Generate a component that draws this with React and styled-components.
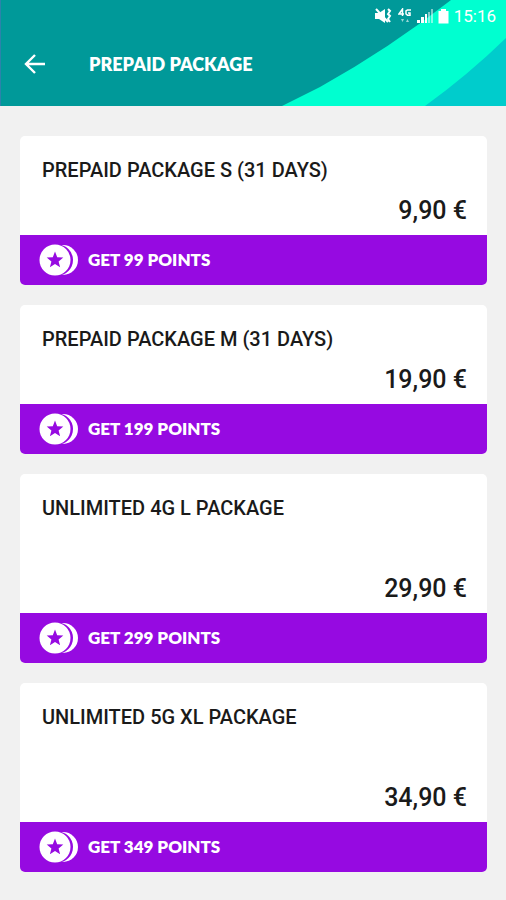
import styled, { createGlobalStyle } from 'styled-components';

const GlobalStyle = createGlobalStyle`
  * {
    box-sizing: border-box;
  }
  body {
    margin: 0;
    background: #f1f1f1;
    font-family: Roboto, 'Liberation Sans', sans-serif;
    color: #1a1a1a;
  }
`;

const Header = styled.header`
  position: relative;
  background: #009999;
  border-left: 1px solid #2b83ab;
  color: #fff;
  overflow: hidden;
`;

const Swoosh = styled.svg`
  position: absolute;
  top: 0;
  right: 0;
  width: 226px;
  height: 100%;
`;

const StatusBar = styled.div`
  position: relative;
  display: flex;
  justify-content: flex-end;
  align-items: center;
  height: 32px;
  padding: 0 10px;
  gap: 5px;
`;

const Clock = styled.time`
  font-size: 17px;
  line-height: 20px;
`;

const TitleBar = styled.div`
  position: relative;
  display: flex;
  align-items: center;
  height: 74px;
  padding: 0 20px 10px;
  gap: 38px;
`;

const BackButton = styled.button`
  display: flex;
  padding: 0;
  border: 0;
  background: none;
  color: inherit;
  cursor: pointer;
`;

const Title = styled.h1`
  margin: 0;
  font-family: Lato, 'Open Sans', sans-serif;
  font-size: 18px;
  line-height: 24px;
  font-weight: 800;
`;

const PackageList = styled.main`
  display: flex;
  flex-direction: column;
  gap: 20px;
  padding: 30px 19px 28px 20px;
`;

const Card = styled.article`
  border-radius: 5px;
  background: #fff;
  overflow: hidden;
`;

const CardBody = styled.div`
  display: flex;
  flex-direction: column;
  justify-content: space-between;
  height: ${({ $tall }) => ($tall ? '139px' : '99px')};
  padding: 22px 20px 9px 22px;
`;

const CardTitle = styled.h2`
  margin: 0;
  font-size: 20px;
  line-height: 24px;
  font-weight: 500;
`;

const Price = styled.p`
  margin: 0;
  font-size: 25px;
  line-height: 30px;
  font-weight: 500;
  text-align: right;
`;

const PointsButton = styled.button`
  display: flex;
  align-items: center;
  width: 100%;
  height: 50px;
  padding: 0 18px;
  gap: 9px;
  border: 0;
  background: #960ae1;
  color: #fff;
  font-family: Lato, 'Open Sans', sans-serif;
  font-size: 17px;
  line-height: 24px;
  font-weight: 800;
  cursor: pointer;
`;

const packages = [
  { name: 'PREPAID PACKAGE S (31 DAYS)', price: '9,90 €', points: 99 },
  { name: 'PREPAID PACKAGE M (31 DAYS)', price: '19,90 €', points: 199 },
  { name: 'UNLIMITED 4G L PACKAGE', price: '29,90 €', points: 299, tall: true },
  { name: 'UNLIMITED 5G XL PACKAGE', price: '34,90 €', points: 349, tall: true },
];

const MutedIcon = () => (
  <svg width="20" height="18" viewBox="0 0 20 18" aria-hidden="true">
    <path d="M2 6h4l6-4v14l-6-4H2z" fill="#fff" />
    <path d="M3 2l12 13" stroke="#fff" strokeWidth="2" />
    <path
      d="M15 2l2 2-2 3 2 2-2 3 2 3"
      fill="none"
      stroke="#fff"
      strokeWidth="2"
    />
  </svg>
);

// 4G label with the small up/down traffic arrows under it
const NetworkIcon = () => (
  <svg width="14" height="16" viewBox="0 0 14 16" aria-hidden="true">
    <path
      d="M4.500 8V1L1 6h5M13 2H9.500L8 3v3l1.500 1.200H12V5h-2"
      fill="none"
      stroke="#fff"
      strokeWidth="1.5"
    />
    <path d="M3 11h3l-1.500 3zM8 14h3l-1.500-3z" fill="#fff" opacity="0.6" />
  </svg>
);

const SignalIcon = () => (
  <svg width="16" height="16" viewBox="0 0 16 16" aria-hidden="true">
    <path d="M0 12h3v3H0zM4 9h3v6H4zM8 6h2v9H8z" fill="#fff" />
    <path d="M11 4h2v11h-2zM14 1h2v14h-2z" fill="#fff" opacity="0.5" />
  </svg>
);

const BatteryIcon = () => (
  <svg width="11" height="16" viewBox="0 0 11 16" aria-hidden="true">
    <path d="M3 1h5v2h2.500v12.500H.500V3H3z" fill="#fff" />
  </svg>
);

const BackIcon = () => (
  <svg width="30" height="24" viewBox="0 0 30 24" aria-hidden="true">
    <path
      d="M14 3l-9 9 9 9M5 12h19"
      fill="none"
      stroke="#fff"
      strokeWidth="2.4"
    />
  </svg>
);

const CoinsIcon = () => (
  <svg width="41" height="34" viewBox="0 0 41 34" aria-hidden="true">
    <circle cx="25" cy="17" r="15" fill="#fff" />
    <circle cx="19.500" cy="17" r="15.500" fill="#960ae1" />
    <circle cx="17" cy="17" r="15.500" fill="#fff" />
    <path
      d="M17 8.500l2.200 5.700 6.100.3-4.700 3.900 1.500 5.900-5.100-3.300-5.100 3.300 1.500-5.900-4.700-3.900 6.100-.3z"
      fill="#960ae1"
    />
  </svg>
);

const App = () => (
  <>
    <GlobalStyle />
    <Header>
      <Swoosh viewBox="0 0 226 106" preserveAspectRatio="none" aria-hidden="true">
        <path d="M2 106L40 87Q110 48 171 0H226V106z" fill="#00ffd0" />
        <path d="M145 106Q188 75 226 38V106z" fill="#00cccc" />
      </Swoosh>
      <StatusBar>
        <MutedIcon />
        <NetworkIcon />
        <SignalIcon />
        <BatteryIcon />
        <Clock>15:16</Clock>
      </StatusBar>
      <TitleBar>
        <BackButton aria-label="Back">
          <BackIcon />
        </BackButton>
        <Title>PREPAID PACKAGE</Title>
      </TitleBar>
    </Header>
    <PackageList>
      {packages.map(({ name, price, points, tall }) => (
        <Card key={name}>
          <CardBody $tall={tall}>
            <CardTitle>{name}</CardTitle>
            <Price>{price}</Price>
          </CardBody>
          <PointsButton>
            <CoinsIcon />
            GET {points} POINTS
          </PointsButton>
        </Card>
      ))}
    </PackageList>
  </>
);

export default App;
